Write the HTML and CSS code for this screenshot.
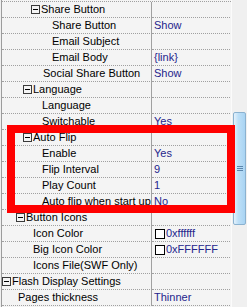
FILE: index.html
```html
<!DOCTYPE html>
<html lang="en">
<head>
    <meta charset="UTF-8">
    <title>Properties</title>
    <link rel="stylesheet" href="styles.css">
</head>
<body>

<div class="panel">
    <div class="grid">
        <div class="row group"><div class="name lvl-31"><span class="box"></span>Share Button</div><div class="value"></div></div>
        <div class="row"><div class="name lvl-52">Share Button</div><div class="value">Show</div></div>
        <div class="row"><div class="name lvl-52">Email Subject</div><div class="value"></div></div>
        <div class="row"><div class="name lvl-52">Email Body</div><div class="value">{link}</div></div>
        <div class="row"><div class="name lvl-43">Social Share Button</div><div class="value">Show</div></div>
        <div class="row group"><div class="name lvl-23"><span class="box"></span>Language</div><div class="value"></div></div>
        <div class="row"><div class="name lvl-42">Language</div><div class="value"></div></div>
        <div class="row"><div class="name lvl-42">Switchable</div><div class="value">Yes</div></div>
        <div class="row group"><div class="name lvl-23"><span class="box"></span>Auto Flip</div><div class="value"></div></div>
        <div class="row"><div class="name lvl-42">Enable</div><div class="value">Yes</div></div>
        <div class="row"><div class="name lvl-42">Flip Interval</div><div class="value">9</div></div>
        <div class="row"><div class="name lvl-42">Play Count</div><div class="value">1</div></div>
        <div class="row"><div class="name lvl-42">Auto flip when start up</div><div class="value">No</div></div>
        <div class="row group"><div class="name lvl-16"><span class="box"></span>Button Icons</div><div class="value"></div></div>
        <div class="row"><div class="name lvl-33">Icon Color</div><div class="value"><span class="swatch"></span>0xffffff</div></div>
        <div class="row"><div class="name lvl-33">Big Icon Color</div><div class="value"><span class="swatch"></span>0xFFFFFF</div></div>
        <div class="row"><div class="name lvl-33">Icons File(SWF Only)</div><div class="value"></div></div>
        <div class="row group"><div class="name lvl-2"><span class="box"></span>Flash Display Settings</div><div class="value"></div></div>
        <div class="row"><div class="name lvl-18">Pages thickness</div><div class="value">Thinner</div></div>
    </div>

    <div class="scroll">
        <div class="thumb">
            <span class="grip"></span>
        </div>
    </div>
</div>

<!-- highlight around the Auto Flip group -->
<div class="highlight"></div>

</body>
</html>
```

FILE: styles.css
```css
body {
    margin: 0;
    font-family: "Liberation Sans", Arial, sans-serif;
    font-size: 11px;
    background-color: #f0f0f0;
    width: 247px;
    height: 307px;
    overflow: hidden;
    position: relative;
}

.panel {
    display: flex;
    height: 307px;
    padding-left: 1px;
}

.grid {
    width: 229px;
    border-left: 1px solid #9c9c9c;
    border-right: 1px solid #fbfbfb;
    background-color: #f4f4f4;
    padding-top: 1px;
    border-top: 0;
}

.grid::before {
    content: "";
    display: block;
    border-bottom: 1px dotted #a0a0a0;
}

.row {
    display: grid;
    grid-template-columns: 150px 78px;
    height: 16px;
}

.name {
    border-right: 1px solid #a0a0a0;
    border-bottom: 1px dotted #a0a0a0;
    white-space: nowrap;
    overflow: hidden;
    line-height: 15px;
    color: #000000;
    display: flex;
    align-items: center;
}

.value {
    border-bottom: 1px dotted #a0a0a0;
    line-height: 15px;
    padding-left: 2px;
    color: #24248c;
    white-space: nowrap;
    overflow: hidden;
    display: flex;
    align-items: center;
}

.lvl-2 { padding-left: 0; }
.lvl-16 { padding-left: 14px; }
.lvl-18 { padding-left: 16px; }
.lvl-23 { padding-left: 21px; }
.lvl-31 { padding-left: 29px; }
.lvl-33 { padding-left: 31px; }
.lvl-42 { padding-left: 40px; }
.lvl-43 { padding-left: 41px; }
.lvl-52 { padding-left: 50px; }

.box {
    width: 7px;
    height: 7px;
    border: 1px solid #3a3a3a;
    margin-right: 1px;
    position: relative;
    flex: none;
}

.box::after {
    content: "";
    position: absolute;
    left: 1px;
    top: 3px;
    width: 5px;
    height: 1px;
    background-color: #000000;
}

.swatch {
    width: 8px;
    height: 8px;
    border: 1px solid #000000;
    background-color: #ffffff;
    margin-left: 1px;
    margin-right: 1px;
    flex: none;
}

.scroll {
    width: 15px;
    background-color: #f0f0f0;
    position: relative;
}

.thumb {
    position: absolute;
    left: 1px;
    top: 112px;
    width: 11px;
    height: 111px;
    border: 1px solid #8bb2d0;
    border-radius: 2px;
    background: linear-gradient(to right, #e4f2fc, #bddff7 40%, #a9d4f3);
}

.grip {
    position: absolute;
    left: 3px;
    top: 53px;
    width: 6px;
    height: 5px;
    background: repeating-linear-gradient(to bottom, #5a86ad 0, #5a86ad 1px, transparent 1px, transparent 2px);
}

.highlight {
    position: absolute;
    left: 7px;
    top: 125px;
    width: 212px;
    height: 72px;
    border: 8px solid #ff0000;
}
```
